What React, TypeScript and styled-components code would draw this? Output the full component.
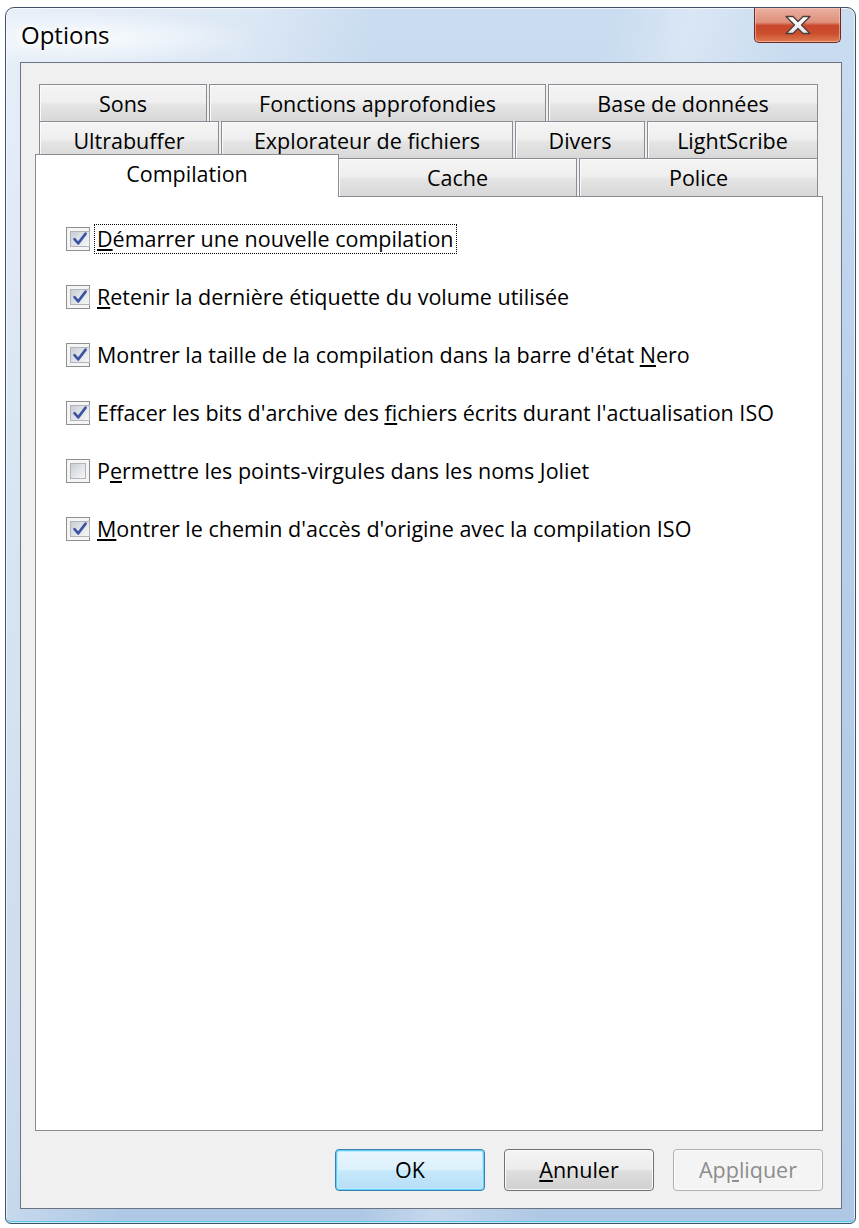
import React from "react";
import styled, { createGlobalStyle } from "styled-components";

const GlobalStyle = createGlobalStyle`
  html, body { margin: 0; padding: 0; background: #ffffff; }
  body { font-family: "Open Sans", "Noto Sans", "DejaVu Sans", sans-serif; color: #000; }
  * { box-sizing: border-box; }
`;

const FONT_SIZE = "21.5px";

const Page = styled.div`
  width: 859px;
  height: 1228px;
  padding: 7px 0 0 5px;
  overflow: hidden;
`;

const Window = styled.div`
  width: 851px;
  height: 1217px;
  border: 1px solid #3f5268;
  border-radius: 9px 9px 6px 6px;
  display: flex;
  flex-direction: column;
  overflow: hidden;
  background:
    radial-gradient(ellipse 230px 36px at 80px 30px, rgba(255, 255, 255, 0.8), rgba(255, 255, 255, 0) 75%),
    linear-gradient(102deg, rgba(255, 255, 255, 0.55) 0%, rgba(255, 255, 255, 0.35) 22%, rgba(255, 255, 255, 0) 34%, rgba(255, 255, 255, 0) 55%, rgba(255, 255, 255, 0.3) 62%, rgba(255, 255, 255, 0) 72%),
    linear-gradient(180deg, #cadcf0 0%, #b9d0ea 35%, #adc7e4 100%);
  box-shadow: inset 0 0 0 1px rgba(255, 255, 255, 0.65), inset 0 -2px 0 #5cc6ea;
`;

const TitleBar = styled.div`
  flex: none;
  height: 54px;
  display: flex;
  justify-content: space-between;
  align-items: flex-start;
  padding: 0 14px 0 15px;
`;

const Title = styled.h1`
  margin: 0;
  align-self: center;
  font-size: 24px;
  font-weight: 400;
  line-height: 32px;
  color: #000;
  text-shadow: 0 0 4px #fff, 0 0 8px #fff, 0 0 12px #fff;
`;

const CloseButton = styled.button`
  width: 87px;
  height: 35px;
  padding: 0;
  border: 1px solid #6a2c24;
  border-top: none;
  border-radius: 0 0 5px 5px;
  background: linear-gradient(
    180deg,
    #eab0a2 0%,
    #df907b 42%,
    #c9462a 52%,
    #cb4f2e 75%,
    #df7a50 100%
  );
  box-shadow: inset 0 0 0 1px rgba(255, 205, 190, 0.55);
  display: flex;
  align-items: center;
  justify-content: center;
`;

const Client = styled.div`
  flex: none;
  height: 1147px;
  margin: 0 13px 0 14px;
  border: 1px solid #6b7480;
  background: #f0f0f0;
  padding: 21px 18px 0 14px;
  display: flex;
  flex-direction: column;
`;

const TabStrip = styled.div`
  flex: none;
  display: flex;
  flex-direction: column;
  padding-left: 4px;
`;

const TabRow = styled.div`
  display: flex;
  align-items: flex-start;
  gap: 2px;
  height: 37px;
  &:last-child {
    height: 38px;
  }
`;

const Tab = styled.div<{ $w: number; $selected?: boolean }>`
  flex: none;
  width: ${(p) => p.$w}px;
  height: ${(p) => (p.$selected ? 43 : 38)}px;
  border: 1px solid #898c95;
  border-bottom: none;
  display: flex;
  align-items: ${(p) => (p.$selected ? "flex-start" : "center")};
  justify-content: center;
  padding-top: ${(p) => (p.$selected ? "4px" : "0")};
  font-size: ${FONT_SIZE};
  line-height: 30px;
  color: #000;
  background: ${(p) =>
    p.$selected
      ? "#ffffff"
      : "linear-gradient(180deg, #f4f4f4 0%, #efefef 45%, #e4e4e4 55%, #d7d7d7 100%)"};
  box-shadow: ${(p) => (p.$selected ? "none" : "inset 1px 1px 0 #fbfbfb")};
  position: ${(p) => (p.$selected ? "relative" : "static")};
  z-index: ${(p) => (p.$selected ? 2 : "auto")};
  margin: ${(p) => (p.$selected ? "-4px -3px 0 -4px" : "0")};
  white-space: nowrap;
`;

const Pane = styled.div`
  flex: none;
  height: 935px;
  border: 1px solid #898c95;
  background: #ffffff;
  padding: 27px 0 0 30px;
  display: flex;
  flex-direction: column;
  gap: 28px;
  position: relative;
  z-index: 1;
`;

const OptionRow = styled.label`
  display: flex;
  align-items: center;
  height: 30px;
  gap: 4px;
`;

const CheckBox = styled.span`
  flex: none;
  width: 24px;
  height: 24px;
  border: 1px solid #8e8f8f;
  background: #f5f5f5;
  padding: 3px;
  display: flex;
`;

const CheckInner = styled.span`
  flex: 1;
  border: 1px solid #b1b5bb;
  background: linear-gradient(135deg, #c8cdd4 0%, #dfe2e6 45%, #f5f6f7 100%);
  display: flex;
  align-items: center;
  justify-content: center;
`;

const OptionText = styled.span<{ $focused?: boolean }>`
  font-size: ${FONT_SIZE};
  line-height: 28px;
  padding: 0 2px;
  border: 1px dotted ${(p) => (p.$focused ? "#000" : "transparent")};
  color: #000;
  white-space: nowrap;
`;

const ButtonRow = styled.div`
  flex: none;
  display: flex;
  justify-content: flex-end;
  gap: 19px;
  margin-top: 18px;
  height: 42px;
`;

const DialogButton = styled.button<{ $variant: "default" | "normal" | "disabled" }>`
  width: 150px;
  height: 42px;
  padding: 0;
  border-radius: 4px;
  font-family: inherit;
  font-size: ${FONT_SIZE};
  line-height: 30px;
  border: 1px solid
    ${(p) => (p.$variant === "default" ? "#3c7fb1" : p.$variant === "normal" ? "#707070" : "#adb2b5")};
  color: ${(p) => (p.$variant === "disabled" ? "#8d8d8d" : "#000")};
  background: ${(p) =>
    p.$variant === "default"
      ? "linear-gradient(180deg, #e8f6fd 0%, #dcf1fc 48%, #c6e8fb 52%, #b6def6 100%)"
      : p.$variant === "normal"
      ? "linear-gradient(180deg, #f4f4f4 0%, #ececec 48%, #dedede 52%, #d0d0d0 100%)"
      : "#f4f4f4"};
  box-shadow: ${(p) =>
    p.$variant === "default"
      ? "inset 0 0 0 1px #5fd0f5, inset 0 0 0 2px #bfeafb"
      : p.$variant === "normal"
      ? "inset 0 0 0 1px #fcfcfc"
      : "inset 0 0 0 1px #fbfbfb"};
`;

const CloseGlyph = () => (
  <svg width="28" height="20" viewBox="0 0 28 20">
    <defs>
      <linearGradient id="xg" x1="0" y1="0" x2="0" y2="1">
        <stop offset="0" stopColor="#ffffff" />
        <stop offset="1" stopColor="#e6e6e6" />
      </linearGradient>
    </defs>
    <polygon
      points="2,1.5 9,1.5 14,6.5 19,1.5 26,1.5 17.5,10 26,18.5 19,18.5 14,13.5 9,18.5 2,18.5 10.5,10"
      fill="url(#xg)"
      stroke="#4e3d3a"
      strokeWidth="1.3"
      strokeLinejoin="round"
    />
  </svg>
);

const CheckMark = () => (
  <svg width="18" height="18" viewBox="0 0 18 18">
    <path
      d="M3.5 9.2 L7.2 13.4 L14.6 3.6"
      fill="none"
      stroke="#3c53a3"
      strokeWidth="2.6"
      strokeLinecap="round"
      strokeLinejoin="round"
    />
  </svg>
);

type TabDef = { label: string; w: number; selected?: boolean };

const tabRows: TabDef[][] = [
  [
    { label: "Sons", w: 168 },
    { label: "Fonctions approfondies", w: 337 },
    { label: "Base de données", w: 270 },
  ],
  [
    { label: "Ultrabuffer", w: 180 },
    { label: "Explorateur de fichiers", w: 292 },
    { label: "Divers", w: 130 },
    { label: "LightScribe", w: 171 },
  ],
  [
    { label: "Compilation", w: 304, selected: true },
    { label: "Cache", w: 239 },
    { label: "Police", w: 239 },
  ],
];

type OptionDef = { checked: boolean; focused?: boolean; text: React.ReactNode };

const options: OptionDef[] = [
  {
    checked: true,
    focused: true,
    text: (
      <>
        <u>D</u>émarrer une nouvelle compilation
      </>
    ),
  },
  {
    checked: true,
    text: (
      <>
        <u>R</u>etenir la dernière étiquette du volume utilisée
      </>
    ),
  },
  {
    checked: true,
    text: (
      <>
        Montrer la taille de la compilation dans la barre d'état <u>N</u>ero
      </>
    ),
  },
  {
    checked: true,
    text: (
      <>
        Effacer les bits d'archive des <u>f</u>ichiers écrits durant l'actualisation ISO
      </>
    ),
  },
  {
    checked: false,
    text: (
      <>
        P<u>e</u>rmettre les points-virgules dans les noms Joliet
      </>
    ),
  },
  {
    checked: true,
    text: (
      <>
        <u>M</u>ontrer le chemin d'accès d'origine avec la compilation ISO
      </>
    ),
  },
];

export default function App() {
  return (
    <>
      <GlobalStyle />
      <Page>
        <Window>
          <TitleBar>
            <Title>Options</Title>
            <CloseButton aria-label="Fermer">
              <CloseGlyph />
            </CloseButton>
          </TitleBar>
          <Client>
            <TabStrip>
              {tabRows.map((row, i) => (
                <TabRow key={i}>
                  {row.map((t) => (
                    <Tab key={t.label} $w={t.w} $selected={t.selected}>
                      {t.label}
                    </Tab>
                  ))}
                </TabRow>
              ))}
            </TabStrip>
            <Pane>
              {options.map((o, i) => (
                <OptionRow key={i}>
                  <CheckBox>
                    <CheckInner>{o.checked && <CheckMark />}</CheckInner>
                  </CheckBox>
                  <OptionText $focused={o.focused}>{o.text}</OptionText>
                </OptionRow>
              ))}
            </Pane>
            <ButtonRow>
              <DialogButton $variant="default">OK</DialogButton>
              <DialogButton $variant="normal">
                <u>A</u>nnuler
              </DialogButton>
              <DialogButton $variant="disabled">
                Ap<u>p</u>liquer
              </DialogButton>
            </ButtonRow>
          </Client>
        </Window>
      </Page>
    </>
  );
}
